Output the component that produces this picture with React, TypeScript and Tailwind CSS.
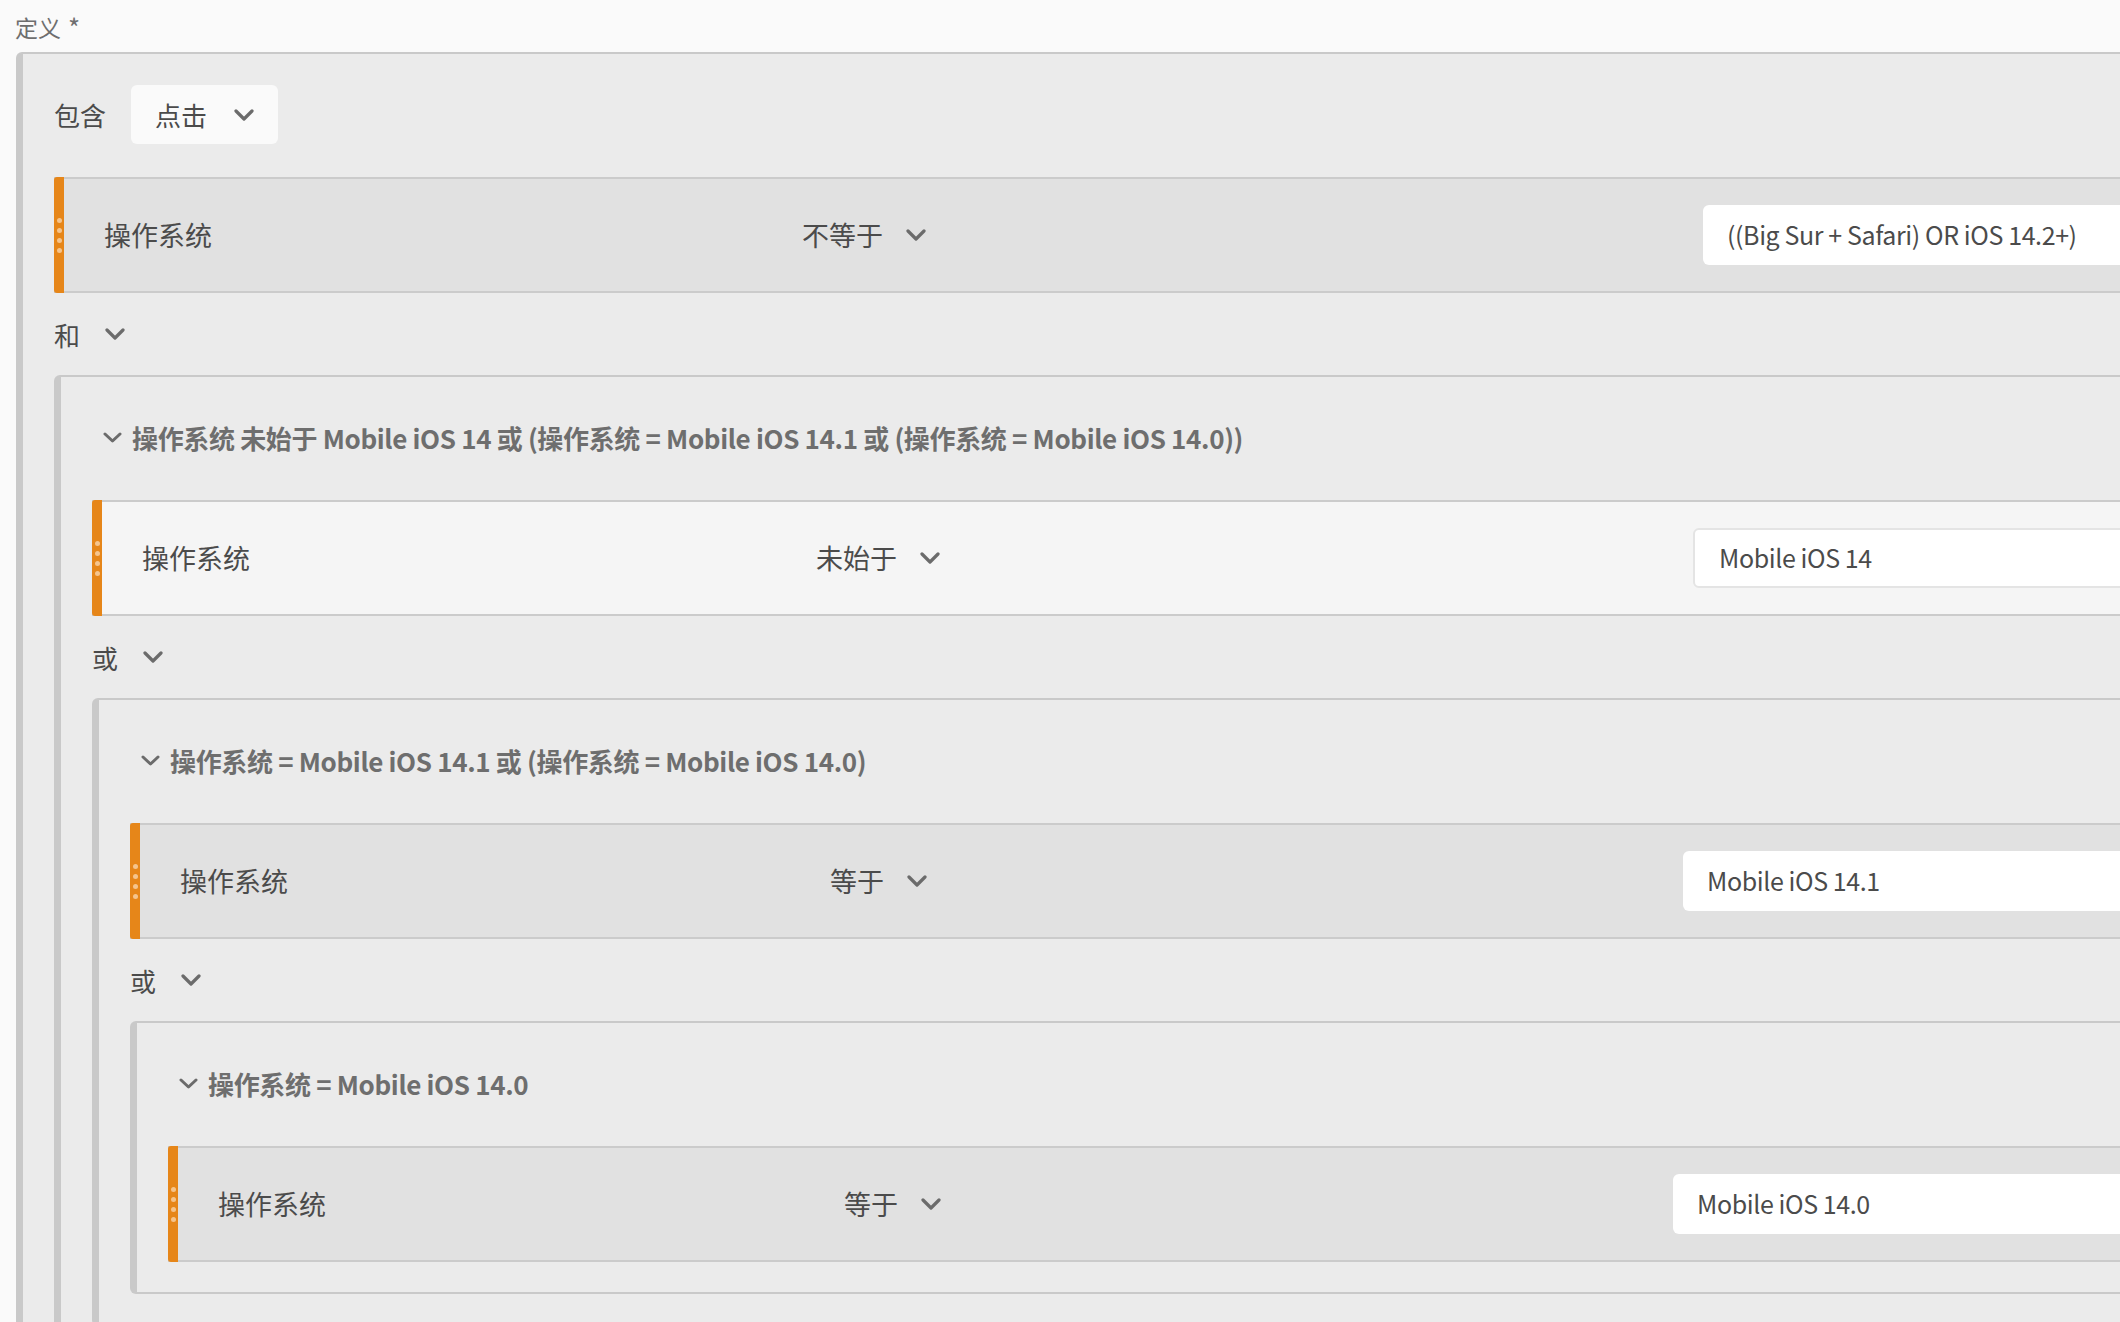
import React from "react";

type RowProps = {
  label: string;
  op: string;
  value: string;
  light?: boolean;
};

function Chevron() {
  return (
    <svg width="20" height="12" viewBox="0 0 20 12" fill="none" className="shrink-0">
      <path d="M2 2L10 10L18 2" stroke="#6b6b6b" strokeWidth="3.2" strokeLinecap="round" strokeLinejoin="round" />
    </svg>
  );
}

function SmallChevron() {
  return (
    <svg width="19" height="11" viewBox="0 0 19 11" fill="none" className="shrink-0">
      <path d="M2 2L9.5 9L17 2" stroke="#6b6b6b" strokeWidth="3" strokeLinecap="round" strokeLinejoin="round" />
    </svg>
  );
}

function Row({ label, op, value, light }: RowProps) {
  return (
    <div
      className={`flex h-[116px] items-stretch border-y-2 border-[#cbcbcb] ${light ? "bg-[#f5f5f5]" : "bg-[#e1e1e1]"}`}
    >
      {/* drag handle */}
      <div className="-my-[2px] flex w-[10px] shrink-0 flex-col items-center justify-center gap-[5px] rounded-l-[3px] bg-[#e68619]">
        <span className="h-[5px] w-[5px] rounded-full bg-[#f5c48c]" />
        <span className="h-[5px] w-[5px] rounded-full bg-[#f5c48c]" />
        <span className="h-[5px] w-[5px] rounded-full bg-[#f5c48c]" />
        <span className="h-[5px] w-[5px] rounded-full bg-[#f5c48c]" />
      </div>
      <div className="flex flex-1 items-center pl-[40px] text-[27px] text-[#4b4b4b]">{label}</div>
      <div className="flex flex-1 items-center gap-[23px] pl-[40px] text-[27px] text-[#4b4b4b]">
        <span>{op}</span>
        <Chevron />
      </div>
      <div className="flex w-[803px] shrink-0 items-center pl-[243px] pr-[40px]">
        <div
          className={`flex h-[60px] w-full items-center rounded-[6px] bg-white pl-[24px] text-[25px] tracking-[-0.4px] text-[#4b4b4b] ${light ? "border-2 border-[#e4e4e4]" : ""}`}
        >
          {value}
        </div>
      </div>
    </div>
  );
}

function Connector({ text }: { text: string }) {
  return (
    <div className="flex h-[82px] items-center gap-[25px] text-[26px] text-[#4b4b4b]">
      <span>{text}</span>
      <Chevron />
    </div>
  );
}

function Group({ title, children }: { title: string; children: React.ReactNode }) {
  return (
    <div className="rounded-l-[6px] border-y-2 border-l-[7px] border-[#c9c9c9] bg-[#ebebeb] pb-[30px] pl-[31px] pr-[10px] pt-[31px]">
      <div className="flex h-[59px] items-center gap-[10px] pl-[11px] text-[26px] font-bold tracking-[-0.35px] text-[#6e6e6e]">
        <SmallChevron />
        <span className="whitespace-nowrap">{title}</span>
      </div>
      <div className="mt-[33px]">{children}</div>
    </div>
  );
}

export default function App() {
  return (
    <div
      className="h-[1322px] w-full overflow-hidden bg-[#fafafa]"
      style={{ fontFamily: '"Noto Sans CJK SC", "Noto Sans", sans-serif' }}
    >
      <div className="flex h-[52px] items-start pl-[15px] pt-[12px] text-[23px] leading-[30px] text-[#6e6e6e]">
        定义 <span className="ml-[7px] text-[26px]">*</span>
      </div>

      <div className="ml-[16px] w-[2257px] rounded-tl-[6px] border-l-[7px] border-t-2 border-[#c9c9c9] bg-[#ebebeb] pl-[31px] pr-[10px] pt-[31px] pb-[40px]">
        <div className="flex h-[59px] items-center gap-[25px] text-[26px] text-[#4b4b4b]">
          <span>包含</span>
          <div className="flex h-[59px] w-[147px] items-center justify-between rounded-[6px] bg-[#fafafa] pl-[24px] pr-[24px]">
            <span>点击</span>
            <Chevron />
          </div>
        </div>

        <div className="mt-[33px]">
          <Row label="操作系统" op="不等于" value="((Big Sur + Safari) OR iOS 14.2+)" />
          <Connector text="和" />
          <Group title="操作系统 未始于 Mobile iOS 14 或 (操作系统 = Mobile iOS 14.1 或 (操作系统 = Mobile iOS 14.0))">
            <Row label="操作系统" op="未始于" value="Mobile iOS 14" light />
            <Connector text="或" />
            <Group title="操作系统 = Mobile iOS 14.1 或 (操作系统 = Mobile iOS 14.0)">
              <Row label="操作系统" op="等于" value="Mobile iOS 14.1" />
              <Connector text="或" />
              <Group title="操作系统 = Mobile iOS 14.0">
                <Row label="操作系统" op="等于" value="Mobile iOS 14.0" />
              </Group>
            </Group>
          </Group>
        </div>
      </div>
    </div>
  );
}
